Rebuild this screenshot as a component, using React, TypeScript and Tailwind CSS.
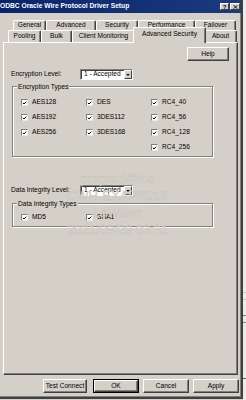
import React from 'react'

const row1 = [
  { label: 'General', w: 'w-[33px]' },
  { label: 'Advanced', w: 'w-[50px]' },
  { label: 'Security', w: 'w-[42px]' },
  { label: 'Performance', w: 'w-[57px]' },
  { label: 'Failover', w: 'w-[41px]' },
]

const row2 = [
  { label: 'Pooling', w: 'w-[33px]' },
  { label: 'Bulk', w: 'w-[31px]' },
  { label: 'Client Monitoring', w: 'w-[63px]' },
  { label: 'Advanced Security', w: 'w-[73px]', selected: true },
  { label: 'About', w: 'w-[33px]' },
]

const encTypes = [
  ['AES128', 'DES', 'RC4_40'],
  ['AES192', '3DES112', 'RC4_56'],
  ['AES256', '3DES168', 'RC4_128'],
  ['', '', 'RC4_256'],
]

const Tab = ({ label, w, selected }: { label: string; w: string; selected?: boolean }) => (
  <div
    className={`${w} flex items-center justify-center border-t border-l border-white border-r border-r-[#404040] rounded-t-[2px] shadow-[inset_-1px_0_0_#808080] bg-[#d4d0c8] ${
      selected ? '-mx-[2px] -mt-[3px] -mb-[1px] h-[16px] relative z-10 pb-[2px]' : 'h-full'
    }`}
  >
    <span className='whitespace-nowrap'>{label}</span>
  </div>
)

const Button = ({ label, w, isDefault }: { label: string; w: string; isDefault?: boolean }) => (
  <div className={`${w} h-[14px] ${isDefault ? 'border border-black' : ''}`}>
    <div className='w-full h-full flex items-center justify-center border-t border-l border-white border-r border-b border-r-[#404040] border-b-[#404040] shadow-[inset_-1px_-1px_0_#808080] bg-[#d4d0c8]'>
      {label}
    </div>
  </div>
)

const Check = ({ label }: { label: string }) => (
  <div className='flex items-center h-[15px]'>
    {label && (
      <>
        <span className='w-[7px] h-[7px] bg-white border-t border-l border-[#808080] border-r border-b border-r-[#e8e8e8] border-b-[#e8e8e8] flex items-center justify-center'>
          <svg viewBox='0 0 7 7' className='w-[6px] h-[6px]'>
            <path d='M1.2 3.2 L2.8 4.9 L5.9 1.6' stroke='#000' strokeWidth='1.4' fill='none' />
          </svg>
        </span>
        <span className='ml-[4px]'>{label}</span>
      </>
    )}
  </div>
)

const Combo = () => (
  <div className='w-[53px] h-[11px] bg-white border-t border-l border-[#808080] border-r border-b border-r-white border-b-white shadow-[inset_1px_1px_0_#404040] flex items-center'>
    <span className='flex-1 pl-[3px] whitespace-nowrap'>1 - Accepted</span>
    <span className='w-[8px] h-[9px] bg-[#d4d0c8] border-t border-l border-white border-r border-b border-r-[#404040] border-b-[#404040] flex items-center justify-center'>
      <svg viewBox='0 0 5 3' className='w-[4px] h-[2px]'>
        <path d='M0 0 L5 0 L2.5 3 Z' fill='#000' />
      </svg>
    </span>
  </div>
)

const GroupBox = ({ title, className, children }: { title: string; className: string; children: React.ReactNode }) => (
  <div className={`relative border border-[#808080] shadow-[inset_1px_1px_0_#fff,1px_1px_0_#fff] ${className}`}>
    <span className='absolute -top-[5px] left-[4px] px-[1px] bg-[#d4d0c8] leading-[9px]'>{title}</span>
    {children}
  </div>
)

export default function App() {
  return (
    <div className="w-[246px] h-[400px] flex bg-[#d4d0c8] text-[6.6px] leading-none text-black font-['Liberation_Sans',Arial,sans-serif] overflow-hidden">
      <div className='w-[243px] h-[399px] flex flex-col border-r-2 border-b-2 border-r-[#404040] border-b-[#404040] shadow-[inset_-1px_-1px_0_#808080]'>
        {/* title bar */}
        <div className='h-[13px] flex items-center bg-gradient-to-r from-[#0a246a] to-[#1b3a80]'>
          <span className='flex-1 text-white font-bold text-[6.7px] whitespace-nowrap'>ODBC Oracle Wire Protocol Driver Setup</span>
          <div className='flex mr-[1px]'>
            <span className='w-[9px] h-[7px] bg-[#d4d0c8] border-t border-l border-white border-r border-b border-r-[#404040] border-b-[#404040] flex items-center justify-center font-bold text-[6px]'>?</span>
            <span className='w-[10px] h-[7px] ml-[1px] bg-[#d4d0c8] border-t border-l border-white border-r border-b border-r-[#404040] border-b-[#404040] flex items-center justify-center'>
              <svg viewBox='0 0 6 5' className='w-[5px] h-[4px]'>
                <path d='M0.5 0.3 L5.5 4.7 M5.5 0.3 L0.5 4.7' stroke='#000' strokeWidth='1.1' />
              </svg>
            </span>
          </div>
        </div>

        {/* tabs */}
        <div className='flex h-[10px] mt-[7px] pl-[13px]'>
          {row1.map((t) => (
            <Tab key={t.label} label={t.label} w={t.w} />
          ))}
        </div>
        <div className='flex h-[12px] pl-[8px]'>
          {row2.map((t) => (
            <Tab key={t.label} label={t.label} w={t.w} selected={t.selected} />
          ))}
        </div>

        {/* panel */}
        <div className='relative ml-[3px] w-[235px] h-[333px] border-t border-l border-white border-r border-b border-r-[#404040] border-b-[#404040] shadow-[inset_-1px_-1px_0_#808080]'>
          <div className='flex justify-end pt-[4px] pr-[8px]'>
            <Button label='Help' w='w-[42px]' />
          </div>

          <div className='flex items-center mt-[8px] pl-[7px]'>
            <span className='w-[69px]'>Encryption Level:</span>
            <Combo />
          </div>

          <GroupBox title='Encryption Types' className='mt-[6px] ml-[8px] w-[201px] h-[71px] pt-[8px] pl-[8px]'>
            <div className='grid grid-cols-[65px_65px_65px]'>
              {encTypes.flat().map((l, i) => (
                <Check key={i} label={l} />
              ))}
            </div>
          </GroupBox>

          <div className='flex items-center mt-[28px] pl-[7px]'>
            <span className='w-[69px]'>Data Integrity Level:</span>
            <Combo />
          </div>

          <GroupBox title='Data Integrity Types' className='mt-[7px] ml-[8px] w-[201px] h-[24px] pt-[6px] pl-[8px]'>
            <div className='grid grid-cols-[65px_65px_65px]'>
              <Check label='MD5' />
              <Check label='SHA1' />
            </div>
          </GroupBox>

          {/* watermark */}
          <div className="pointer-events-none absolute left-0 right-0 top-[127px] flex flex-col items-center text-[13px] leading-[17px] text-[#d8d5ce] [-webkit-text-stroke:0.35px_#c4c0b8] -ml-[6px]">
            <span>preprad@ice</span>
            <span>CWH-EXAPR016</span>
            <span className='italic'>LeWaws</span>
            <span>2021/09/29 03:31</span>
          </div>
        </div>

        {/* buttons */}
        <div className='flex justify-end mt-[4px] pr-[2px] gap-[4px]'>
          <div className='mr-[2px]'>
            <Button label='Test Connect' w='w-[44px]' />
          </div>
          <Button label='OK' w='w-[46px]' isDefault />
          <Button label='Cancel' w='w-[46px]' />
          <Button label='Apply' w='w-[46px]' />
        </div>
      </div>

      {/* strip of the window behind */}
      <div className='flex-1 flex flex-col bg-[#ecebe8]'>
        <div className='mt-[292px] h-[1px] bg-[#c8c8c8]' />
        <div className='mt-[6px] h-[1px] bg-[#c8c8c8]' />
        <div className='mt-[15px] h-[1px] bg-[#808080]' />
        <div className='mt-[6px] h-[1px] bg-[#808080]' />
        <div className='mt-[55px] h-[1px] bg-[#606060]' />
      </div>
    </div>
  )
}
